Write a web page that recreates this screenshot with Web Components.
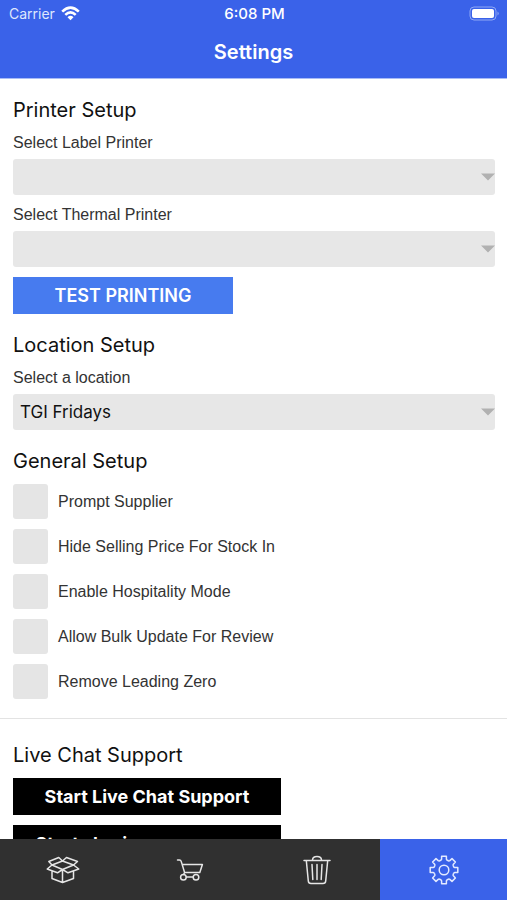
<!DOCTYPE html>
<html lang="en">
<head>
<meta charset="utf-8">
<meta name="viewport" content="width=device-width, initial-scale=1">
<title>Settings</title>
<style>
html, body { margin: 0; height: 100%; }
body { font-family: Inter, "Liberation Sans", sans-serif; color: #111; background: #fff; }
</style>
</head>
<body>
<settings-app></settings-app>
<script>
function define(name, html, setup) {
  const template = document.createElement('template');
  template.innerHTML = html;
  customElements.define(name, class extends HTMLElement {
    constructor() {
      super();
      this.attachShadow({ mode: 'open' }).append(template.content.cloneNode(true));
    }
    connectedCallback() { if (setup) setup(this, this.shadowRoot); }
  });
}

define('status-bar', `
<style>
:host { display: grid; grid-template-columns: 1fr auto 1fr; align-items: center; height: 27px; padding: 0 7px 0 9px; font-size: 14px; line-height: 20px; }
.left { display: flex; align-items: center; gap: 6px; color: #dfe7fd; }
.time { font-size: 15px; font-weight: 500; }
.battery { justify-self: end; }
svg { display: block; }
</style>
<span class="left"><span>Carrier</span>
<svg width="19" height="15" viewBox="0 0 19 15" fill="none" stroke="#fff" stroke-width="2.6"><path d="M1.2 5.6Q9.5 -2.4 17.8 5.6M4.3 8.9Q9.5 3.9 14.7 8.9"/><path d="M6.5 11.2Q9.5 8.4 12.5 11.2L9.5 14.3Z" fill="#fff" stroke="none"/></svg></span>
<span class="time">6:08 PM</span>
<svg class="battery" width="31" height="16" viewBox="0 0 31 16"><rect x="1" y="1" width="26" height="13" rx="4" fill="none" stroke="#8fa8f5"/><rect x="3" y="3" width="22" height="9" rx="2" fill="#fff"/><path d="M28.5 5.5Q31 7.5 28.5 9.5Z" fill="#8fa8f5"/></svg>
`);

define('app-header', `
<style>
:host { display: block; flex: none; background: #3a62e9; color: #fff; border-bottom: 1px solid #a9bbf6; }
h1 { margin: 0; padding: 11px 0 12px; font-size: 20px; line-height: 28px; font-weight: 600; text-align: center; }
</style>
<status-bar></status-bar>
<h1><slot></slot></h1>
`);

define('settings-section', `
<style>
:host { display: flex; flex-direction: column; gap: 11px; }
h2 { margin: 0; font-size: 20px; line-height: 24px; font-weight: 400; color: #111; }
.body { display: flex; flex-direction: column; align-items: stretch; gap: 10px; }
</style>
<h2></h2>
<div class="body"><slot></slot></div>
`, (el, root) => { root.querySelector('h2').textContent = el.getAttribute('heading'); });

define('select-field', `
<style>
:host { display: flex; flex-direction: column; gap: 6px; }
label { font: 16px/20px "Liberation Sans", sans-serif; color: #333; }
.box { display: grid; align-items: center; background: #e7e7e7; border-radius: 3px; }
select, svg { grid-area: 1 / 1; }
select { appearance: none; width: 100%; height: 36px; margin: 0; padding: 0 20px 0 7px; border: 0; border-radius: 3px; background: none; font: 17px/20px Inter, sans-serif; color: #111; }
svg { justify-self: end; pointer-events: none; }
</style>
<label for="field"></label>
<div class="box"><select id="field"></select>
<svg width="14" height="8" viewBox="0 0 14 8"><path d="M0 .5H14L7 7.5Z" fill="#b1b1b1"/></svg></div>
`, (el, root) => {
  root.querySelector('label').textContent = el.getAttribute('label');
  root.querySelector('select').add(new Option(el.getAttribute('value') || ''));
});

define('check-field', `
<style>
:host { display: block; }
label { display: flex; align-items: center; gap: 10px; font: 16px/20px "Liberation Sans", sans-serif; color: #333; }
input { appearance: none; flex: none; width: 35px; height: 35px; margin: 0; border-radius: 3px; background: #e5e5e5; }
input:checked { background: #477bef; }
</style>
<label><input type="checkbox"><span><slot></slot></span></label>
`);

define('action-button', `
<style>
:host { display: block; width: 268px; max-width: 100%; }
:host([primary]) { width: 220px; }
button { display: block; width: 100%; height: 37px; margin: 0; padding: 0; border: 0; background: #000; color: #fff; font: 700 18px/20px Inter, sans-serif; white-space: nowrap; }
:host([primary]) button { background: #477bef; font-weight: 600; }
</style>
<button type="button"><slot></slot></button>
`);

define('tab-item', `
<style>
:host { display: flex; flex: 1; }
button { flex: 1; display: flex; align-items: center; justify-content: center; margin: 0; padding: 0; border: 0; background: #303030; color: #e6e6e6; }
:host([active]) button { background: #3a62e9; color: #e3eaff; }
</style>
<button type="button"><slot></slot></button>
`, (el, root) => { root.querySelector('button').setAttribute('aria-label', el.getAttribute('label')); });

define('tab-bar', `
<style>
:host { display: flex; flex: none; height: 61px; background: #303030; }
svg { display: block; fill: none; stroke: currentColor; stroke-width: 1.5; stroke-linejoin: round; stroke-linecap: round; }
</style>
<tab-item label="Stock"><svg width="34" height="28" viewBox="0 0 34 28"><path d="M6 9L16.5 5L12.8 1.5L2.8 5.5ZM16.5 5L27.5 9L31.5 5.5L20.5 1.5ZM6 9L16.5 13.5L11.5 16.8L1.2 13ZM27.5 9L16.5 13.5L22 16.8L32.8 13ZM6 15V22.5L16.5 26.5L27.5 22.5V15M16.5 13.5V26.5"/></svg></tab-item>
<tab-item label="Cart"><svg width="28" height="24" viewBox="0 0 28 24"><path d="M1.5 2H3.4Q4.8 2 5.2 3.4L8.6 14.5M6.3 6.5H26.4L23.8 14.5H8.6L7.6 16.5M10.4 19H17.2"/><circle cx="7.4" cy="19.2" r="2.8"/><circle cx="20" cy="19.2" r="2.8"/></svg></tab-item>
<tab-item label="Trash"><svg width="28" height="30" viewBox="0 0 28 30"><path d="M1 5.5H27M3.3 5.5L5.3 26Q5.5 28.5 8 28.5H20Q22.5 28.5 22.7 26L24.7 5.5M9.5 5Q9.7 1.5 14 1.5T18.5 5M9 9.5L9.8 24.5M14 9.5V24.5M19 9.5L18.2 24.5"/></svg></tab-item>
<tab-item label="Settings" active><svg width="30" height="30" viewBox="0 0 30 30"><path d="M12.6 1.2H17.4V4.2Q17.5 5 18.3 5.3L19.4 5.8Q20.2 6.1 20.8 5.6L23 3.6L26.4 7L24.4 9.2Q23.9 9.8 24.2 10.6L24.7 11.7Q25 12.5 25.8 12.6H28.8V17.4H25.8Q25 17.5 24.7 18.3L24.2 19.4Q23.9 20.2 24.4 20.8L26.4 23L23 26.4L20.8 24.4Q20.2 23.9 19.4 24.2L18.3 24.7Q17.5 25 17.4 25.8V28.8H12.6V25.8Q12.5 25 11.7 24.7L10.6 24.2Q9.8 23.9 9.2 24.4L7 26.4L3.6 23L5.6 20.8Q6.1 20.2 5.8 19.4L5.3 18.3Q5 17.5 4.2 17.4H1.2V12.6H4.2Q5 12.5 5.3 11.7L5.8 10.6Q6.1 9.8 5.6 9.2L3.6 7L7 3.6L9.2 5.6Q9.8 6.1 10.6 5.8L11.7 5.3Q12.5 5 12.6 4.2Z"/><circle cx="15" cy="15" r="4.8"/></svg></tab-item>
`);

define('settings-app', `
<style>
:host { display: flex; flex-direction: column; height: 100vh; }
main { flex: 1; min-height: 0; overflow: hidden; }
.group { display: flex; flex-direction: column; gap: 19px; padding: 19px 12px 19px 13px; }
.support { border-top: 1px solid #e3e3e3; padding-top: 24px; }
</style>
<app-header>Settings</app-header>
<main>
  <div class="group">
    <settings-section heading="Printer Setup">
      <select-field label="Select Label Printer"></select-field>
      <select-field label="Select Thermal Printer"></select-field>
      <action-button primary>TEST PRINTING</action-button>
    </settings-section>
    <settings-section heading="Location Setup">
      <select-field label="Select a location" value="TGI Fridays"></select-field>
    </settings-section>
    <settings-section heading="General Setup">
      <check-field>Prompt Supplier</check-field>
      <check-field>Hide Selling Price For Stock In</check-field>
      <check-field>Enable Hospitality Mode</check-field>
      <check-field>Allow Bulk Update For Review</check-field>
      <check-field>Remove Leading Zero</check-field>
    </settings-section>
  </div>
  <div class="group support">
    <settings-section heading="Live Chat Support">
      <action-button>Start Live Chat Support</action-button>
      <action-button>Start sharing your screen</action-button>
    </settings-section>
  </div>
</main>
<tab-bar></tab-bar>
`);
</script>
</body>
</html>
